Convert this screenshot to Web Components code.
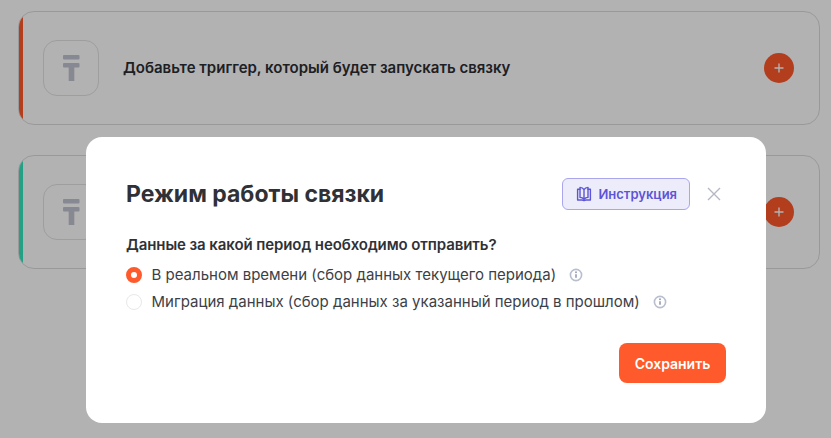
<!DOCTYPE html>
<html lang="ru">
<head>
<meta charset="utf-8">
<title>Режим работы связки</title>
<style>
    html, body { margin: 0; height: 100%; }
    body { font-family: Inter, "Noto Sans", sans-serif; background: #fff; overflow: hidden; }
    .page { display: flex; flex-direction: column; gap: 30px; padding: 11px 11px 0 18px; }
</style>
</head>
<body>
<div class="page">
    <trigger-card color="#ff5a2b">Добавьте триггер, который будет запускать связку</trigger-card>
    <trigger-card color="#36e6bd"></trigger-card>
</div>
<mode-dialog heading="Режим работы связки" question="Данные за какой период необходимо отправить?">
    <mode-option checked>В реальном времени (сбор данных текущего периода)</mode-option>
    <mode-option>Миграция данных (сбор данных за указанный период в прошлом)</mode-option>
</mode-dialog>

<script>
class TriggerCard extends HTMLElement {
    connectedCallback() {
        this.attachShadow({ mode: 'open' });
        const color = this.getAttribute('color') || '#ff5a2b';
        this.shadowRoot.innerHTML = `
            <style>
                :host {
                    display: flex;
                    align-items: center;
                    box-sizing: border-box;
                    height: 114px;
                    padding-right: 25px;
                    overflow: hidden;
                    border: 1px solid #dcdcdc;
                    border-radius: 16px;
                    background: #fff;
                }
                .bar {
                    flex: none;
                    align-self: stretch;
                    width: 4px;
                    background: ${color};
                }
                .logo {
                    flex: none;
                    display: flex;
                    align-items: center;
                    justify-content: center;
                    width: 56px;
                    height: 56px;
                    margin-left: 20px;
                    box-sizing: border-box;
                    border: 1px solid #e2e2e4;
                    border-radius: 14px;
                }
                .text {
                    flex: 1;
                    margin-left: 24px;
                    padding-bottom: 2px;
                    font-size: 15px;
                    font-weight: 600;
                    color: #2b2d33;
                }
                .add {
                    flex: none;
                    display: flex;
                    align-items: center;
                    justify-content: center;
                    width: 30px;
                    height: 30px;
                    border-radius: 50%;
                    background: #ff5a2b;
                }
            </style>
            <div class="bar"></div>
            <div class="logo">
                <svg width="18" height="28" viewBox="0 0 18 28" fill="#c2c4d2">
                    <rect x="1" y="1" width="16.5" height="4.5" rx="1"/>
                    <rect x="1" y="9" width="16.5" height="4.5" rx="1"/>
                    <rect x="6.7" y="9" width="5.6" height="18"/>
                </svg>
            </div>
            <div class="text"><slot></slot></div>
            <div class="add">
                <svg width="10" height="10" viewBox="0 0 10 10" stroke="#fff" stroke-width="1.4">
                    <path d="M5 .5v9M.5 5h9"/>
                </svg>
            </div>
        `;
    }
}

class ModeOption extends HTMLElement {
    connectedCallback() {
        this.attachShadow({ mode: 'open' });
        this.shadowRoot.innerHTML = `
            <style>
                :host {
                    display: flex;
                    align-items: center;
                    height: 27px;
                    font-size: 15px;
                    color: #3c3f47;
                }
                .radio {
                    flex: none;
                    width: 16px;
                    height: 16px;
                    box-sizing: border-box;
                    margin-right: 9.5px;
                    border: 1px solid #e8e8ec;
                    border-radius: 50%;
                    background: #fff;
                }
                :host([checked]) .radio {
                    border: 5px solid #ff5a2b;
                }
                svg { flex: none; margin-left: 13px; }
            </style>
            <span class="radio"></span>
            <span><slot></slot></span>
            <svg width="14" height="14" viewBox="0 0 14 14" fill="none">
                <circle cx="7" cy="7" r="5.6" stroke="#b8bece" stroke-width="1.6"/>
                <path d="M7 6.2v3.6" stroke="#9aa1b4" stroke-width="1.7"/>
                <circle cx="7" cy="4.3" r="1" fill="#9aa1b4"/>
            </svg>
        `;
    }
}

class ModeDialog extends HTMLElement {
    connectedCallback() {
        this.attachShadow({ mode: 'open' });
        this.shadowRoot.innerHTML = `
            <style>
                :host {
                    display: block;
                    position: fixed;
                    inset: 0;
                    background: rgba(0, 0, 0, 0.3);
                }
                .box {
                    position: absolute;
                    left: 86px;
                    top: 137px;
                    box-sizing: border-box;
                    width: 680px;
                    height: 286px;
                    padding: 41px 40px 0 40px;
                    border-radius: 16px;
                    background: #fff;
                }
                .head {
                    display: flex;
                    align-items: center;
                }
                h2 {
                    flex: 1;
                    margin: 0;
                    font-size: 23px;
                    line-height: 32px;
                    font-weight: 700;
                    color: #2f3136;
                }
                .guide {
                    display: flex;
                    align-items: center;
                    gap: 6px;
                    box-sizing: border-box;
                    height: 32px;
                    padding: 0 12px 0 13px;
                    border: 1px solid #a9a6ee;
                    border-radius: 6px;
                    background: #edecfb;
                    color: #5c55d6;
                    font: 600 13px Inter, sans-serif;
                }
                .close {
                    display: block;
                    margin-left: 17px;
                    margin-right: 5px;
                }
                .question {
                    margin: 25px 0 6px;
                    font-size: 15px;
                    line-height: 20px;
                    font-weight: 600;
                    letter-spacing: -.09px;
                    color: #2f3136;
                }
                .foot {
                    display: flex;
                    justify-content: flex-end;
                    margin-top: 28px;
                }
                .save {
                    height: 40px;
                    width: 107px;
                    border: 0;
                    border-radius: 8px;
                    background: #ff5a2b;
                    color: #fff;
                    font: 600 14px Inter, sans-serif;
                }
            </style>
            <div class="box">
                <div class="head">
                    <h2>${this.getAttribute('heading')}</h2>
                    <div class="guide">
                        <svg width="16" height="16" viewBox="0 0 16 16" fill="none" stroke="#5c55d6" stroke-width="1.4" stroke-linejoin="round" stroke-linecap="round">
                            <path d="M8 3.6C7 2 5.8 1.4 4 1.4v10c1.8 0 3 .6 4 2 1-1.4 2.2-2 4-2v-10c-1.8 0-3 .6-4 2.2zM8 3.6v9.8"/>
                            <path d="M4 3.2H1.6V14H6c.9 0 1.5.2 2 .6.5-.4 1.1-.6 2-.6h4.400V3.200H12"/>
                        </svg>
                        <span>Инструкция</span>
                    </div>
                    <svg class="close" width="14" height="14" viewBox="0 0 14 14" stroke="#b4b8c4" stroke-width="1.4">
                        <path d="M1 1l12 12M13 1L1 13"/>
                    </svg>
                </div>
                <p class="question">${this.getAttribute('question')}</p>
                <slot></slot>
                <div class="foot"><button class="save">Сохранить</button></div>
            </div>
        `;
    }
}

customElements.define('trigger-card', TriggerCard);
customElements.define('mode-option', ModeOption);
customElements.define('mode-dialog', ModeDialog);
</script>
</body>
</html>
